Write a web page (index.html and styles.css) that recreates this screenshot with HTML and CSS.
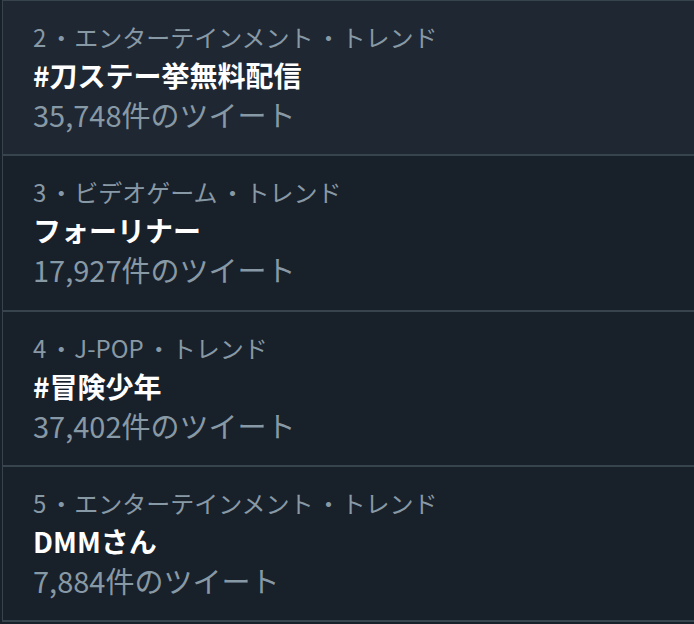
FILE: index.html
```html
<!DOCTYPE html>
<html lang="ja">
<head>
<meta charset="utf-8">
<link rel="stylesheet" href="styles.css">
</head>
<body>
<div class="list">
  <div class="trend hover">
    <div class="meta">2<span class="sep">・</span>エンターテインメント<span class="sep">・</span>トレンド</div>
    <div class="title">#刀ステー挙無料配信</div>
    <div class="count">35,748件のツイート</div>
  </div>
  <div class="trend">
    <div class="meta">3<span class="sep">・</span>ビデオゲーム<span class="sep">・</span>トレンド</div>
    <div class="title">フォーリナー</div>
    <div class="count">17,927件のツイート</div>
  </div>
  <div class="trend">
    <div class="meta">4<span class="sep">・</span>J-POP<span class="sep">・</span>トレンド</div>
    <div class="title">#冒険少年</div>
    <div class="count">37,402件のツイート</div>
  </div>
  <div class="trend">
    <div class="meta">5<span class="sep">・</span>エンターテインメント<span class="sep">・</span>トレンド</div>
    <div class="title">DMMさん</div>
    <div class="count">7,884件のツイート</div>
  </div>
</div>
</body>
</html>
```
FILE: styles.css
```css
html, body {
  margin: 0;
  padding: 0;
  background: #18202a;
}
body {
  padding-left: 2px;
  font-family: "Noto Sans CJK JP", "Noto Sans", sans-serif;
}
.list {
  border-left: 1px solid #38444d;
  border-top: 1px solid #38444d;
}
.trend {
  height: 155px;
  padding: 16px 0 0 30px;
  box-sizing: border-box;
  border-bottom: 2px solid #38444d;
  background: #18202a;
}
.trend:nth-child(2) { height: 156px; }
.trend.hover { background: #1e2732; }
.meta {
  color: #8899a6;
  font-size: 24px;
  line-height: 39px;
}
.sep {
  margin: 0 1px 0 3px;
}
.title {
  color: #ffffff;
  font-size: 28px;
  font-weight: 700;
  line-height: 39px;
}
.count {
  color: #8899a6;
  font-size: 29px;
  line-height: 39px;
}
```
